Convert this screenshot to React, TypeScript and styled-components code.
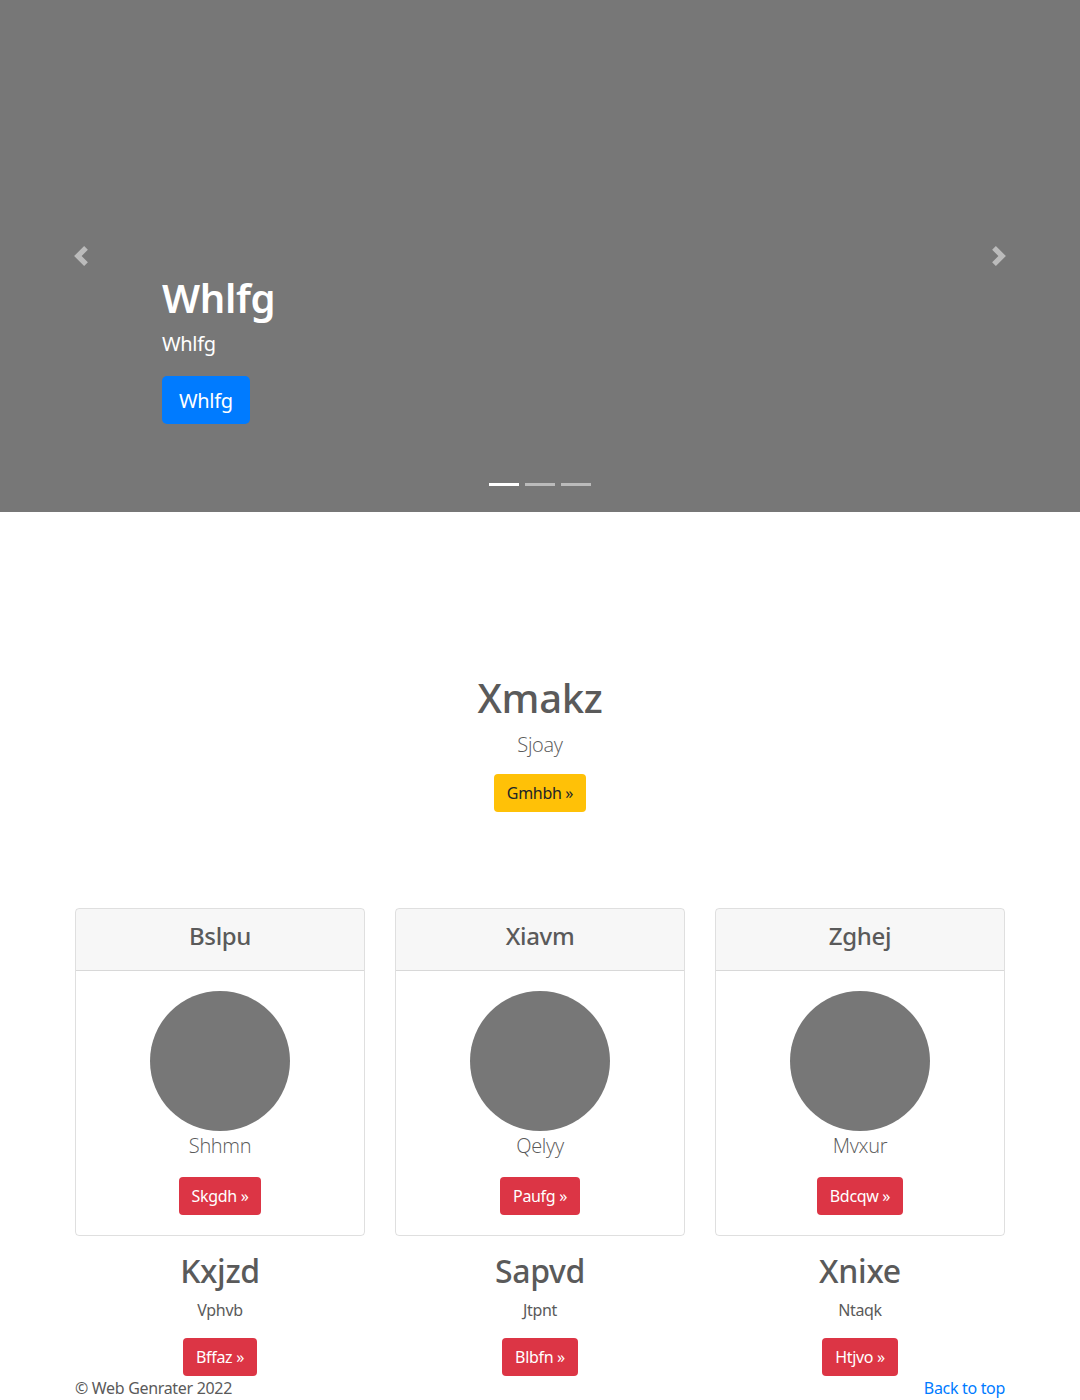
import React from "react";
import styled, { createGlobalStyle } from "styled-components";

const Global = createGlobalStyle`
  * { box-sizing: border-box; }
  body {
    margin: 0;
    font-family: "Noto Sans", "Open Sans", Arial, sans-serif;
    font-size: 16px;
    line-height: 1.5;
    letter-spacing: -0.02em;
    color: #5a5a5a;
    background: #fff;
  }
  h1, h2, h4, p { margin: 0; }
`;

const Carousel = styled.div`
  position: relative;
  height: 512px;
  background: #777;
  display: flex;
  flex-direction: column;
  justify-content: flex-end;
  padding: 0 15% 88px;
  color: #fff;
`;

const CaptionTitle = styled.h1`
  font-size: 40px;
  line-height: 48px;
  font-weight: 600;
  margin-bottom: 8px;
`;

const CaptionText = styled.p`
  font-size: 20px;
  line-height: 28px;
  margin-bottom: 18px;
`;

const Btn = styled.a<{ $variant: "primary" | "warning" | "danger"; $lg?: boolean }>`
  display: inline-block;
  align-self: ${(p) => (p.$lg ? "flex-start" : "auto")};
  font-size: ${(p) => (p.$lg ? "20px" : "16px")};
  line-height: ${(p) => (p.$lg ? "30px" : "24px")};
  padding: ${(p) => (p.$lg ? "9px 16px 7px" : "6px 12px")};
  border-radius: ${(p) => (p.$lg ? "5px" : "4px")};
  border: 1px solid transparent;
  text-decoration: none;
  cursor: pointer;
  background: ${(p) =>
    p.$variant === "primary" ? "#007bff" : p.$variant === "warning" ? "#ffc107" : "#dc3545"};
  color: ${(p) => (p.$variant === "warning" ? "#212529" : "#fff")};
`;

const Control = styled.a<{ $side: "left" | "right" }>`
  position: absolute;
  top: 0;
  bottom: 0;
  ${(p) => p.$side}: 0;
  width: 15%;
  display: flex;
  align-items: center;
  justify-content: center;
  opacity: 0.5;
`;

const Indicators = styled.ol`
  position: absolute;
  left: 0;
  right: 0;
  bottom: 26px;
  margin: 0;
  padding: 0;
  list-style: none;
  display: flex;
  justify-content: center;
  gap: 6px;
`;

const Indicator = styled.li<{ $active?: boolean }>`
  width: 30px;
  height: 3px;
  background: ${(p) => (p.$active ? "#fff" : "rgba(255,255,255,0.5)")};
`;

const Container = styled.div`
  width: 930px;
  margin: 0 auto;
`;

const Hero = styled.section`
  padding-top: 162px;
  text-align: center;
`;

const HeroTitle = styled.h1`
  font-size: 40px;
  line-height: 48px;
  font-weight: 500;
  margin-bottom: 8px;
`;

const Lead = styled.p`
  font-family: "Open Sans", "Noto Sans", Arial, sans-serif;
  font-size: 20px;
  line-height: 30px;
  font-weight: 300;
`;

const HeroLead = styled(Lead)`
  margin-bottom: 14px;
`;

const Row = styled.div`
  display: grid;
  grid-template-columns: repeat(3, 1fr);
  column-gap: 30px;
  margin-top: 96px;
`;

const Column = styled.div`
  text-align: center;
  display: flex;
  flex-direction: column;
  align-items: center;
`;

const Card = styled.div`
  width: 100%;
  border: 1px solid rgba(0, 0, 0, 0.125);
  border-radius: 4px;
  margin-bottom: 16px;
  overflow: hidden;
`;

const CardHeader = styled.div`
  padding: 12px 20px;
  background: rgba(0, 0, 0, 0.03);
  border-bottom: 1px solid rgba(0, 0, 0, 0.125);
`;

const CardTitle = styled.h4`
  font-size: 24px;
  line-height: 29px;
  font-weight: 500;
  margin-bottom: 8px;
`;

const CardBody = styled.div`
  padding: 20px;
  display: flex;
  flex-direction: column;
  align-items: center;
`;

const Avatar = styled.div`
  width: 140px;
  height: 140px;
  border-radius: 50%;
  background: #777;
`;

const CardLead = styled(Lead)`
  margin-bottom: 16px;
`;

const ColTitle = styled.h2`
  font-size: 32px;
  line-height: 38px;
  font-weight: 500;
  margin-bottom: 8px;
`;

const ColText = styled.p`
  margin-bottom: 16px;
`;

const Footer = styled.footer`
  display: flex;
  justify-content: space-between;
  line-height: 24px;
`;

const Link = styled.a`
  color: #007bff;
  text-decoration: none;
`;

const Prev = () => (
  <svg width="20" height="20" viewBox="0 0 8 8">
    <path fill="#fff" d="M5.25 0l-4 4 4 4 1.5-1.5L4.25 4l2.5-2.5L5.25 0z" />
  </svg>
);
const Next = () => (
  <svg width="20" height="20" viewBox="0 0 8 8">
    <path fill="#fff" d="M2.75 0l-1.5 1.5L3.75 4l-2.5 2.5L2.75 8l4-4-4-4z" />
  </svg>
);

const cols = [
  { card: "Bslpu", lead: "Shhmn", cbtn: "Skgdh", title: "Kxjzd", text: "Vphvb", btn: "Bffaz" },
  { card: "Xiavm", lead: "Qelyy", cbtn: "Paufg", title: "Sapvd", text: "Jtpnt", btn: "Blbfn" },
  { card: "Zghej", lead: "Mvxur", cbtn: "Bdcqw", title: "Xnixe", text: "Ntaqk", btn: "Htjvo" },
];

export default function App() {
  return (
    <>
      <Global />
      <Carousel>
        <CaptionTitle>Whlfg</CaptionTitle>
        <CaptionText>Whlfg</CaptionText>
        <Btn $variant="primary" $lg>Whlfg</Btn>
        <Control $side="left"><Prev /></Control>
        <Control $side="right"><Next /></Control>
        <Indicators>
          <Indicator $active />
          <Indicator />
          <Indicator />
        </Indicators>
      </Carousel>
      <Container>
        <Hero>
          <HeroTitle>Xmakz</HeroTitle>
          <HeroLead>Sjoay</HeroLead>
          <Btn $variant="warning">Gmhbh »</Btn>
        </Hero>
        <Row>
          {cols.map((c) => (
            <Column key={c.card}>
              <Card>
                <CardHeader>
                  <CardTitle>{c.card}</CardTitle>
                </CardHeader>
                <CardBody>
                  <Avatar />
                  <CardLead>{c.lead}</CardLead>
                  <Btn $variant="danger">{c.cbtn} »</Btn>
                </CardBody>
              </Card>
              <ColTitle>{c.title}</ColTitle>
              <ColText>{c.text}</ColText>
              <Btn $variant="danger">{c.btn} »</Btn>
            </Column>
          ))}
        </Row>
        <Footer>
          <p>© Web Genrater 2022</p>
          <Link href="#">Back to top</Link>
        </Footer>
      </Container>
    </>
  );
}
